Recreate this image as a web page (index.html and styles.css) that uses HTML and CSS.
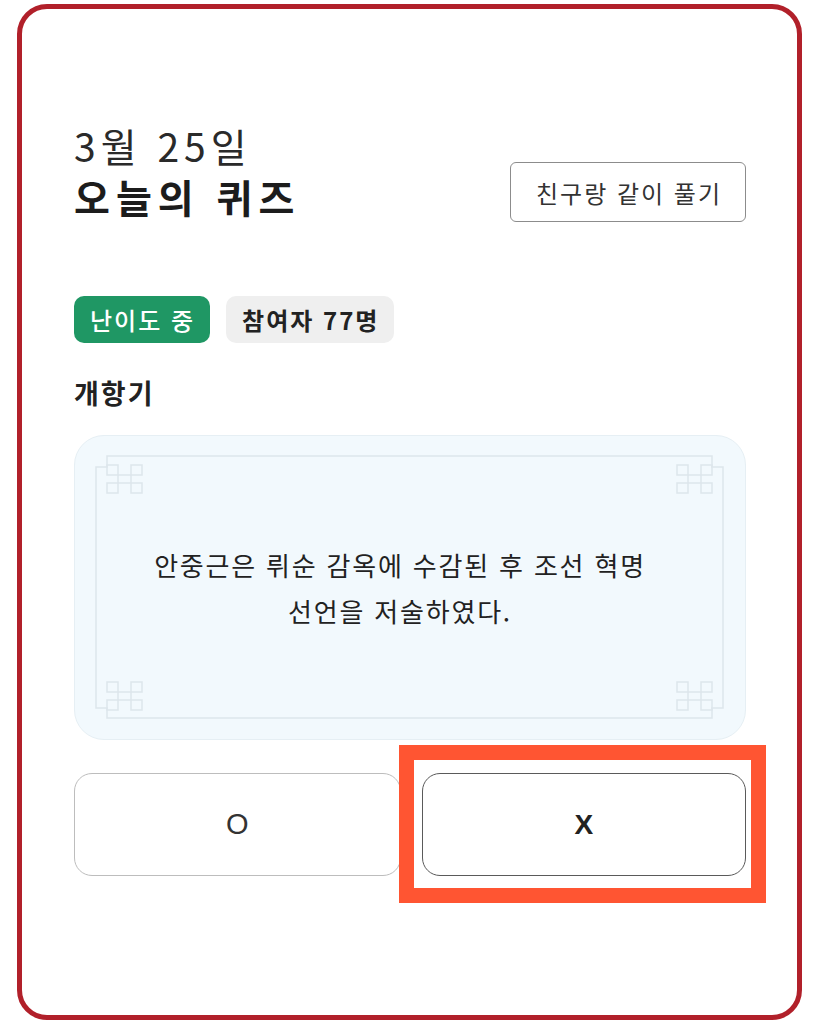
FILE: index.html
```html
<!DOCTYPE html>
<html lang="ko">
<head>
<meta charset="utf-8">
<title>오늘의 퀴즈</title>
<link rel="stylesheet" href="styles.css">
</head>
<body>
<div class="frame">
  <header class="head">
    <div class="titles">
      <p class="date">3월 25일</p>
      <h1 class="title">오늘의 퀴즈</h1>
    </div>
    <button class="friend">친구랑 같이 풀기</button>
  </header>
  <div class="badges">
    <span class="badge badge-green">난이도 중</span>
    <span class="badge badge-gray">참여자 77명</span>
  </div>
  <h2 class="cat">개항기</h2>
  <div class="qcard">
    <svg class="ornament" width="672" height="305" viewBox="0 0 672 305" fill="none" stroke="#dde6eb" stroke-width="1.5">
      <defs>
        <g id="knot">
          <rect x="0" y="0" width="11" height="10"/>
          <rect x="24" y="0" width="11" height="10"/>
          <rect x="0" y="18" width="11" height="10"/>
          <rect x="24" y="18" width="11" height="10"/>
          <rect x="11" y="10" width="13" height="8"/>
        </g>
      </defs>
      <path d="M33 32 L33 21 L638 21 L638 32 L649 32 L649 273 L638 273 L638 283 L33 283 L33 273 L22 273 L22 32 Z"/>
      <use href="#knot" x="33" y="30"/>
      <use href="#knot" x="603" y="30"/>
      <use href="#knot" x="33" y="247"/>
      <use href="#knot" x="603" y="247"/>
    </svg>
    <p class="qtext">안중근은 뤼순 감옥에 수감된 후 조선 혁명<br>선언을 저술하였다.</p>
  </div>
  <div class="answers">
    <button class="ans ans-o">O</button>
    <div class="xwrap">
      <button class="ans ans-x">X</button>
      <span class="highlight"></span>
    </div>
  </div>
</div>
</body>
</html>
```

FILE: styles.css
```css
* { box-sizing: border-box; }
html, body { margin: 0; padding: 0; background: #ffffff; }
body {
  font-family: "Noto Sans CJK KR", "Noto Sans", sans-serif;
  color: #222222;
}
.frame {
  margin: 4px 0 0 17px;
  width: 785px;
  height: 1016px;
  border: 5px solid #b1202a;
  border-radius: 30px;
  padding: 110px 51px 0 52px;
  background: #ffffff;
}
.head {
  display: flex;
  justify-content: space-between;
  align-items: flex-end;
}
.titles { display: flex; flex-direction: column; }
.date {
  margin: 0;
  font-size: 39px;
  line-height: 52px;
  font-weight: 400;
  letter-spacing: 5px;
  color: #2a2a2a;
}
.title {
  margin: 0;
  font-size: 39px;
  line-height: 51px;
  font-weight: 700;
  letter-spacing: 6px;
  color: #1c1c1c;
}
.friend {
  width: 236px;
  height: 60px;
  border: 1.5px solid #8c8c8c;
  border-radius: 6px;
  background: #ffffff;
  font-family: inherit;
  font-size: 24px;
  letter-spacing: 2px;
  text-indent: 2px;
  color: #333333;
  padding: 0;
}
.badges {
  display: flex;
  gap: 16px;
  margin-top: 74px;
}
.badge {
  display: inline-block;
  height: 47px;
  line-height: 47px;
  padding: 0 15px 0 16px;
  border-radius: 10px;
  font-size: 24px;
  letter-spacing: 2px;
}
.badge-green { background: #1f9764; color: #ffffff; font-weight: 500; }
.badge-gray { background: #efefef; color: #222222; font-weight: 700; }
.cat {
  margin: 32px 0 0;
  font-size: 27px;
  line-height: 36px;
  font-weight: 700;
  letter-spacing: 2px;
  color: #222222;
}
.qcard {
  position: relative;
  margin-top: 24px;
  height: 305px;
  background: #f2f9fd;
  border: 1px solid #e6eff4;
  border-radius: 30px;
  display: flex;
  align-items: center;
  justify-content: center;
  padding-right: 20px;
}
.ornament {
  position: absolute;
  left: -1px;
  top: -1px;
}
.qtext {
  position: relative;
  margin: 0;
  text-align: center;
  font-size: 26px;
  line-height: 46px;
  letter-spacing: 1.8px;
  color: #222222;
}
.answers {
  display: flex;
  gap: 21px;
  margin-top: 33px;
}
.ans {
  width: 100%;
  height: 103px;
  border-radius: 18px;
  background: #ffffff;
  font-family: "Liberation Sans", "Noto Sans", sans-serif;
  padding: 0;
}
.ans-o {
  flex: 1;
  border: 1.5px solid #bdbdbd;
  font-size: 29px;
  font-weight: 400;
  color: #333333;
}
.xwrap {
  flex: 1;
  position: relative;
  display: flex;
}
.ans-x {
  border: 1.5px solid #5a5a5a;
  font-size: 28px;
  font-weight: 700;
  color: #222222;
}
.highlight {
  position: absolute;
  left: -23px;
  top: -28px;
  right: -20px;
  bottom: -27px;
  border: 15px solid #ff5532;
  pointer-events: none;
}
```
